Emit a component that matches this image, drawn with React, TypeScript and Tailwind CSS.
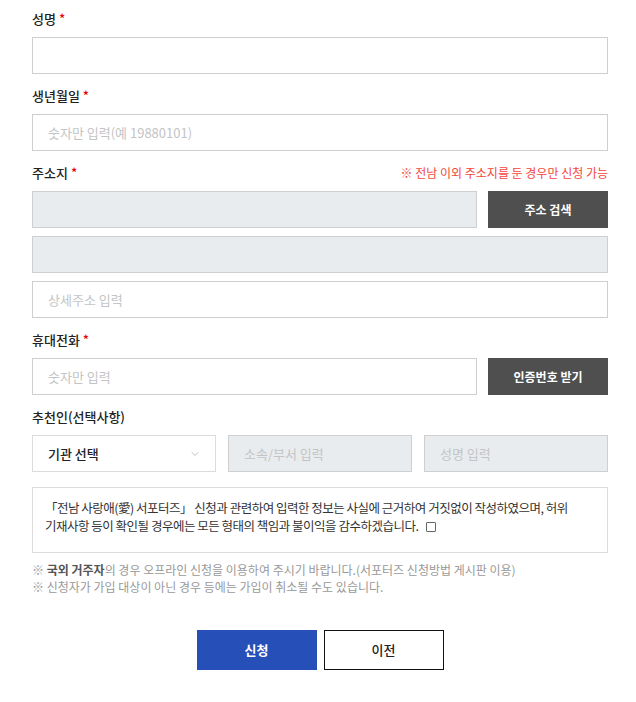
import { ChevronDown } from 'lucide-react'

const font = { fontFamily: '"Noto Sans CJK KR", "Noto Sans", sans-serif' }

function Label({ text, required }: { text: string; required?: boolean }) {
  return (
    <div className="text-[13px] leading-[20px] font-medium text-[#222] mb-[8px]">
      {text}
      {required && <span className="text-[#e60012] ml-[3px]">*</span>}
    </div>
  )
}

function Field({ placeholder, disabled }: { placeholder?: string; disabled?: boolean }) {
  return (
    <input
      disabled={disabled}
      placeholder={placeholder}
      className={
        'block w-full h-[37px] border border-[#cfcfcf] px-[15px] text-[13px] outline-none placeholder:text-[#c4c4c4] ' +
        (disabled ? 'bg-[#e9ecef]' : 'bg-white')
      }
    />
  )
}

export default function App() {
  return (
    <div className="bg-white w-[636px] min-h-[702px] pl-[32px] pr-[28px] pt-[9px] pb-[30px] text-[#222]" style={font}>
      {/* 성명 */}
      <section>
        <Label text="성명" required />
        <Field />
      </section>

      {/* 생년월일 */}
      <section className="mt-[12px]">
        <Label text="생년월일" required />
        <Field placeholder="숫자만 입력(예 19880101)" />
      </section>

      {/* 주소지 */}
      <section className="mt-[12px]">
        <div className="flex items-start justify-between">
          <Label text="주소지" required />
          <span className="text-[12px] leading-[20px] text-[#f2463c]">※ 전남 이외 주소지를 둔 경우만 신청 가능</span>
        </div>
        <div className="flex gap-[11px]">
          <div className="flex-1">
            <Field disabled />
          </div>
          <button className="w-[120px] h-[37px] bg-[#4f4f4f] text-white text-[12px] font-bold">주소 검색</button>
        </div>
        <div className="mt-[8px]">
          <Field disabled />
        </div>
        <div className="mt-[8px]">
          <Field placeholder="상세주소 입력" />
        </div>
      </section>

      {/* 휴대전화 */}
      <section className="mt-[12px]">
        <Label text="휴대전화" required />
        <div className="flex gap-[11px]">
          <div className="flex-1">
            <Field placeholder="숫자만 입력" />
          </div>
          <button className="w-[120px] h-[37px] bg-[#4f4f4f] text-white text-[12px] font-bold">인증번호 받기</button>
        </div>
      </section>

      {/* 추천인 */}
      <section className="mt-[12px]">
        <div className="text-[13px] leading-[20px] font-medium text-[#222] mb-[8px]">추천인(선택사항)</div>
        <div className="grid grid-cols-3 gap-[12px]">
          <div className="h-[37px] border border-[#dcdcdc] bg-white flex items-center justify-between pl-[15px] pr-[14px]">
            <span className="text-[13px] font-medium text-[#222]">기관 선택</span>
            <ChevronDown className="w-[12px] h-[12px] text-[#aaa]" strokeWidth={1.5} />
          </div>
          <Field placeholder="소속/부서 입력" disabled />
          <Field placeholder="성명 입력" disabled />
        </div>
      </section>

      {/* 동의 */}
      <div className="mt-[15px] border border-[#dcdcdc] px-[12px] pt-[11px] h-[66px]">
        <p className="text-[12.5px] leading-[18px] tracking-[-0.5px] text-[#333] break-keep">
          「전남 사랑애(愛) 서포터즈」 신청과 관련하여 입력한 정보는 사실에 근거하여 거짓없이 작성하였으며, 허위 기재사항 등이 확인될 경우에는 모든 형태의 책임과 불이익을 감수하겠습니다.
          <span className="inline-block align-middle ml-[8px] w-[10px] h-[10px] border border-[#666] rounded-[1px] -mt-[2px]" />
        </p>
      </div>

      {/* 안내 */}
      <div className="mt-[8px] text-[12px] leading-[17px] text-[#999]">
        <p>
          ※ <span className="text-[#555] font-bold">국외 거주자</span>의 경우 오프라인 신청을 이용하여 주시기 바랍니다.(서포터즈 신청방법 게시판 이용)
        </p>
        <p>※ 신청자가 가입 대상이 아닌 경우 등에는 가입이 취소될 수도 있습니다.</p>
      </div>

      {/* 버튼 */}
      <div className="mt-[35px] flex justify-center gap-[7px]">
        <button className="w-[120px] h-[40px] bg-[#274fb8] text-white text-[13px] font-bold">신청</button>
        <button className="w-[120px] h-[40px] bg-white border border-[#111] text-[#222] text-[13px] font-medium">이전</button>
      </div>
    </div>
  )
}
